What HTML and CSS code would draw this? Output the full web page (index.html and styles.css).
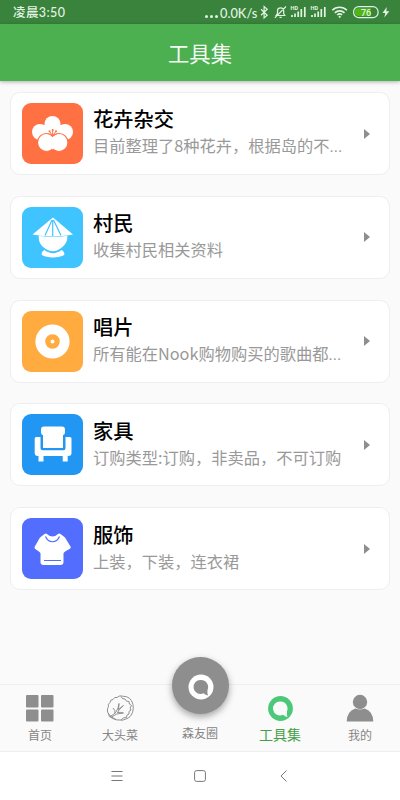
FILE: index.html
```
<!DOCTYPE html>
<html lang="zh-CN">
<head>
<meta charset="utf-8">
<title>工具集</title>
<link rel="stylesheet" href="styles.css">
</head>
<body>
<div class="app">
  <header class="status">
    <span class="time">凌晨3:50</span>
    <span class="speed"><b class="dots"><i></i><i></i><i></i></b>0.0K/s</span>
    <svg class="status-icons" viewBox="258 0 142 24" width="142" height="24" fill="none" stroke="#e3f3e3" stroke-width="1.2">
      <path d="M261 9.200l6.200 6-3.100 2.800V6.500l3.100 2.800-6.200 6"/>
      <path d="M276.200 15.500h8.600l-1.100-1.800V10.500c0-3.600-6-3.600-6.200 0v3.200zM279.500 17.300h2.200M274.800 17.800L286 6.500"/>
      <path d="M292 17v-2M295 17v-3.500M298.200 17v-5.500M301.300 17v-8M304.800 17V7M312 17v-2M315 17v-3.500M318.200 17v-5.500M321.300 17v-8M324.800 17V7" stroke-width="1.700"/>
      <path d="M332.300 10.300c4-4 10.500-4 14.600 0M334.800 12.800c2.700-2.600 7-2.600 9.700 0M337.200 15c1.400-1.300 3.500-1.300 4.900 0" stroke-width="1.600"/>
      <circle cx="339.700" cy="16.800" r="1.100" fill="#e3f3e3" stroke="none"/>
      <rect x="353.600" y="6.600" width="24.500" height="11" rx="5.200"/>
      <path d="M358.500 8.200H371v7.800h-12.500a3.900 3.900 0 0 1 0-7.800z" fill="#50b516" stroke="none"/>
      <path d="M386.800 7l-4.300 6h2.800l-1 4.500 5-6.300h-3z" fill="#e3f3e3" stroke="none"/>
      <g fill="#e3f3e3" stroke="none" class="hd"><text x="290.500" y="10.300">HD</text><text x="310.500" y="10.300">HD</text></g>
      <text class="pct" x="366" y="15.600" text-anchor="middle" fill="#e3f3e3" stroke="none">76</text>
    </svg>
  </header>
  <h1 class="bar">工具集</h1>
  <main class="list">
    <section class="card">
      <svg class="tile flower" viewBox="0 0 61 61">
        <g fill="#fff"><circle cx="30.500" cy="21" r="8"/><circle cx="18" cy="29" r="8"/><circle cx="43" cy="29" r="8"/><path d="M22 22h17v17H22z"/></g>
        <g fill="#fff" stroke="#ff7043" stroke-width="1.200"><circle cx="24.500" cy="39.500" r="9"/><circle cx="37" cy="39.500" r="9"/></g>
        <path d="M27 34h7.500v9.500l-3.700 3-3.800-3z" fill="#fff"/>
        <path d="M30.700 33v-6M30.700 33l-3-4.500M30.700 33l3-4.500M30.700 33l-4.500-2.500M30.700 33l4.500-2.500" stroke="#ff7043" stroke-width="1"/>
        <g fill="#ff7043"><circle cx="30.700" cy="27" r="1"/><circle cx="27.500" cy="28.300" r="1"/><circle cx="34" cy="28.300" r="1"/></g>
      </svg>
      <div class="copy"><h2>花卉杂交</h2><p>目前整理了8种花卉，根据岛的不<span class="more">...</span></p></div>
      <i class="arrow"></i>
    </section>
    <section class="card">
      <svg class="tile villager" viewBox="0 0 61 61">
        <path fill="#fff" d="M31 10.500L10.500 27.500c13 2.500 28 2.500 40.500 0zM16.800 28.800c9.500 1.600 19 1.600 28.500 0 .5 6-2.500 10-7.500 13.200q-7 4.500-14 0c-5-3.200-7.500-7.200-7-13.200zM22.500 43c5.500 4.200 11.500 4.200 17 0 2.200 1 3.300 3 2.700 5-5 3.300-17.500 3.300-22.400 0-.6-2 .5-4 2.700-5z"/>
        <path d="M30 13l-7 15.500M30.700 13v16M31.500 13l7.500 15.500" fill="none" stroke="#40c4ff" stroke-width="1.200"/>
      </svg>
      <div class="copy"><h2>村民</h2><p>收集村民相关资料</p></div>
      <i class="arrow"></i>
    </section>
    <section class="card">
      <svg class="tile record" viewBox="0 0 61 61">
        <circle cx="30.500" cy="30.500" r="12.200" fill="none" stroke="#fff" stroke-width="9.800"/><circle cx="30.500" cy="30.500" r="2" fill="#fff"/>
      </svg>
      <div class="copy"><h2>唱片</h2><p>所有能在Nook购物购买的歌曲都<span class="more">...</span></p></div>
      <i class="arrow"></i>
    </section>
    <section class="card">
      <svg class="tile furniture" viewBox="0 0 61 61" fill="#fff">
        <path d="M22 12.500h18a3 3 0 0 1 3 3v3a3 3 0 0 1-2 2.800V34H21V21.300a3 3 0 0 1-2-2.800v-3a3 3 0 0 1 3-3z"/>
        <path d="M14 23h4.500v11.300q0 2 2 2h21q2 0 2-2V23H48q1.500 0 1.500 1.500V39q0 3-3 3h-.8v5.500h-5V42H21.500v5.500h-5V42h-.8q-3 0-3-3V24.500Q12.700 23 14 23z"/>
      </svg>
      <div class="copy"><h2>家具</h2><p>订购类型:订购，非卖品，不可订购</p></div>
      <i class="arrow"></i>
    </section>
    <section class="card">
      <svg class="tile clothes" viewBox="0 0 61 61">
        <path fill="#fff" d="M22.500 16q1.200-1 2.500 0 5.500 5 11 0 1.300-1 2.500 0l4.500 3.500 5.500 9q.8 1.500-.5 2.300l-4.500 2.500q-1.500.8-2 2V44q0 3-3 3h-17q-3 0-3-3V35.300q-.5-1.200-2-2l-3.200-2.200q-1.300-1-.5-2.500l5.200-9.100z"/>
        <path d="M23.500 18.500c3 7 11 7 14 0M22 42.500h17" fill="none" stroke="#536dfe" stroke-width="1.200"/>
      </svg>
      <div class="copy"><h2>服饰</h2><p>上装，下装，连衣裙</p></div>
      <i class="arrow"></i>
    </section>
  </main>
  <nav class="tabs">
    <a class="tab">
      <svg width="28" height="28" viewBox="0 0 28 28" fill="#8e8e8e"><rect x="0" y="1" width="12.500" height="12.500" rx="1"/><rect x="15" y="1" width="12.500" height="12.500" rx="1"/><rect x="0" y="15.500" width="12.500" height="12" rx="1"/><rect x="15" y="15.500" width="12.500" height="12" rx="1"/></svg>
      <span>首页</span>
    </a>
    <a class="tab">
      <svg width="28" height="28" viewBox="0 0 28 28" fill="none" stroke="#858585" stroke-width=".9"><path d="M7 24.500Q2 23 2.500 19.500L1.500 18Q1 14 2.500 12.500 1.500 10 4 8.500 4 5.500 7 5.500 8.500 2.500 11 3.500 14 .8 16.500 2.200 25 2 27 10.500 28.500 19 22.500 24 17 27.500 10 25.800zM2 19Q4 23.500 10 25.500M15 2.500Q16 5.500 19 5 20 8 23 7.500 22.500 10.500 25.500 11.500 23 14 25 16 22 17 23 20 20 20.500 20.500 23.500 17 23 15 26"/><path d="M4 22.500Q12 19 13 9.500L12.500 15.500 17.500 11.500Q12 16 11.500 18.500 14 18 17.500 19 10 19 5.500 23M9 19.500Q9.500 16 7 14"/></svg>
      <span>大头菜</span>
    </a>
    <a class="tab middle">
      <b class="fab"><svg width="26" height="26" viewBox="0 0 26 26"><circle cx="13" cy="13" r="12.500" fill="#fff"/><path fill="#8e8e8e" d="M13 6a7 7 0 1 0 2.500 13.300q2 2 4.500 2.100-1-2-.5-5.500A7 7 0 0 0 13 6z"/></svg></b>
      <span>森友圈</span>
    </a>
    <a class="tab active">
      <svg width="26" height="28" viewBox="0 0 26 28"><circle cx="13.500" cy="14.500" r="12.400" fill="#4bc979"/><path fill="#fafafa" d="M13.500 7.500a7 7 0 1 0 2.500 13.300q2 2 4.500 2.200-1-2-.5-5.700A7 7 0 0 0 13.500 7.500z"/></svg>
      <span>工具集</span>
    </a>
    <a class="tab">
      <svg width="28" height="28" viewBox="0 0 28 28" fill="#8e8e8e"><circle cx="14" cy="8" r="7.200"/><path d="M.7 27.500Q1 17 9.500 14.500q4.500 2 9 0Q27 17 27.300 27.500z"/></svg>
      <span>我的</span>
    </a>
  </nav>
  <footer class="system">
    <svg width="12" height="12" viewBox="0 0 12 12"><path d="M.5 1.500h11M.5 6h11M.5 10.500h11"/></svg>
    <svg width="12" height="12" viewBox="0 0 12 12"><rect x=".6" y=".6" width="10.800" height="10.800" rx="2"/></svg>
    <svg width="12" height="12" viewBox="0 0 12 12"><path d="M9.500.5L4 6l5.500 5.500"/></svg>
  </footer>
</div>
</body>
</html>
```

FILE: styles.css
```
* { box-sizing: border-box; }
body { margin: 0; font-family: Roboto, "Noto Sans CJK SC", sans-serif; }
h1, h2, p { margin: 0; font-weight: 400; }
.app { width: 400px; height: 800px; display: flex; flex-direction: column; background: #fafafa; overflow: hidden; }
.status { height: 24px; flex: none; display: flex; align-items: center; background: #39833c; color: #e3f3e3; padding-left: 13px; font-family: Lato, "Noto Sans CJK SC", sans-serif; }
.time { width: 192px; font-size: 12.500px; font-weight: 500; letter-spacing: .4px; line-height: 24px; padding-top: 1px; }
.speed { width: 53px; display: flex; font-size: 12.800px; font-weight: 500; line-height: 24px; padding-top: 1px; }
.dots { display: flex; gap: 2px; align-items: flex-end; padding-bottom: 7px; margin-right: 2px; }
.dots i { width: 3px; height: 3px; border-radius: 50%; background: #e3f3e3; }
.status-icons { flex: none; }
.hd { font: 700 5.500px Roboto, sans-serif; }
.pct { font: 500 9px Roboto, sans-serif; }
.bar { height: 57px; flex: none; background: #4caf50; color: #f4fbf4; font-size: 21.300px; line-height: 57px; text-align: center; box-shadow: 0 1px 4px rgba(0,0,0,.3); font-family: "Noto Sans CJK SC", sans-serif; }
.list { flex: 1; padding: 11px 10px 0; display: flex; flex-direction: column; gap: 20.800px; }
.card { height: 83px; flex: none; display: flex; align-items: center; padding: 0 19px 0 10.500px; background: #fff; border: 1px solid #eeeeee; border-radius: 10px; }
.tile { width: 61px; height: 61px; flex: none; border-radius: 9px; }
.flower { background: #ff7043; }
.villager { background: #40c4ff; }
.record { background: #ffab40; }
.furniture { background: #2196f3; }
.clothes { background: #536dfe; }
.copy { width: 256px; margin-left: 10.500px; }
.copy h2 { font: 500 20.300px/24px "Noto Sans CJK SC", sans-serif; color: #000; }
.copy p { padding: 2px 0 1px; font: 400 16.250px/27px "Noto Sans CJK SC", sans-serif; color: #999; white-space: nowrap; }
.more { font-family: Roboto, sans-serif; }
.arrow { margin-left: auto; border-left: 6px solid #8e8e8e; border-top: 5px solid transparent; border-bottom: 5px solid transparent; }
.tabs { height: 68px; flex: none; display: flex; border-top: 1px solid #eeeeee; border-bottom: 1px solid #eeeeee; }
.tab { width: 80px; display: flex; flex-direction: column; align-items: center; padding-top: 9px; color: #858585; font: 12px/18px "Noto Sans CJK SC", sans-serif; }
.tab span { margin-top: 4px; }
.active { color: #43a047; font-size: 14px; }
.active span { margin-top: 3px; }
.middle { padding-top: 0; }
.fab { width: 57px; height: 57px; margin-top: -28px; border-radius: 50%; background: #8e8e8e; display: flex; align-items: center; justify-content: center; box-shadow: 0 3px 7px rgba(0,0,0,.35); flex: none; }
.fab svg { margin: 2px 0 0 2px; }
.middle span { margin-top: 10px; }
.system { height: 48px; flex: none; background: #fff; display: flex; align-items: center; justify-content: center; gap: 71px; fill: none; stroke: #777; stroke-width: 1; }
```
